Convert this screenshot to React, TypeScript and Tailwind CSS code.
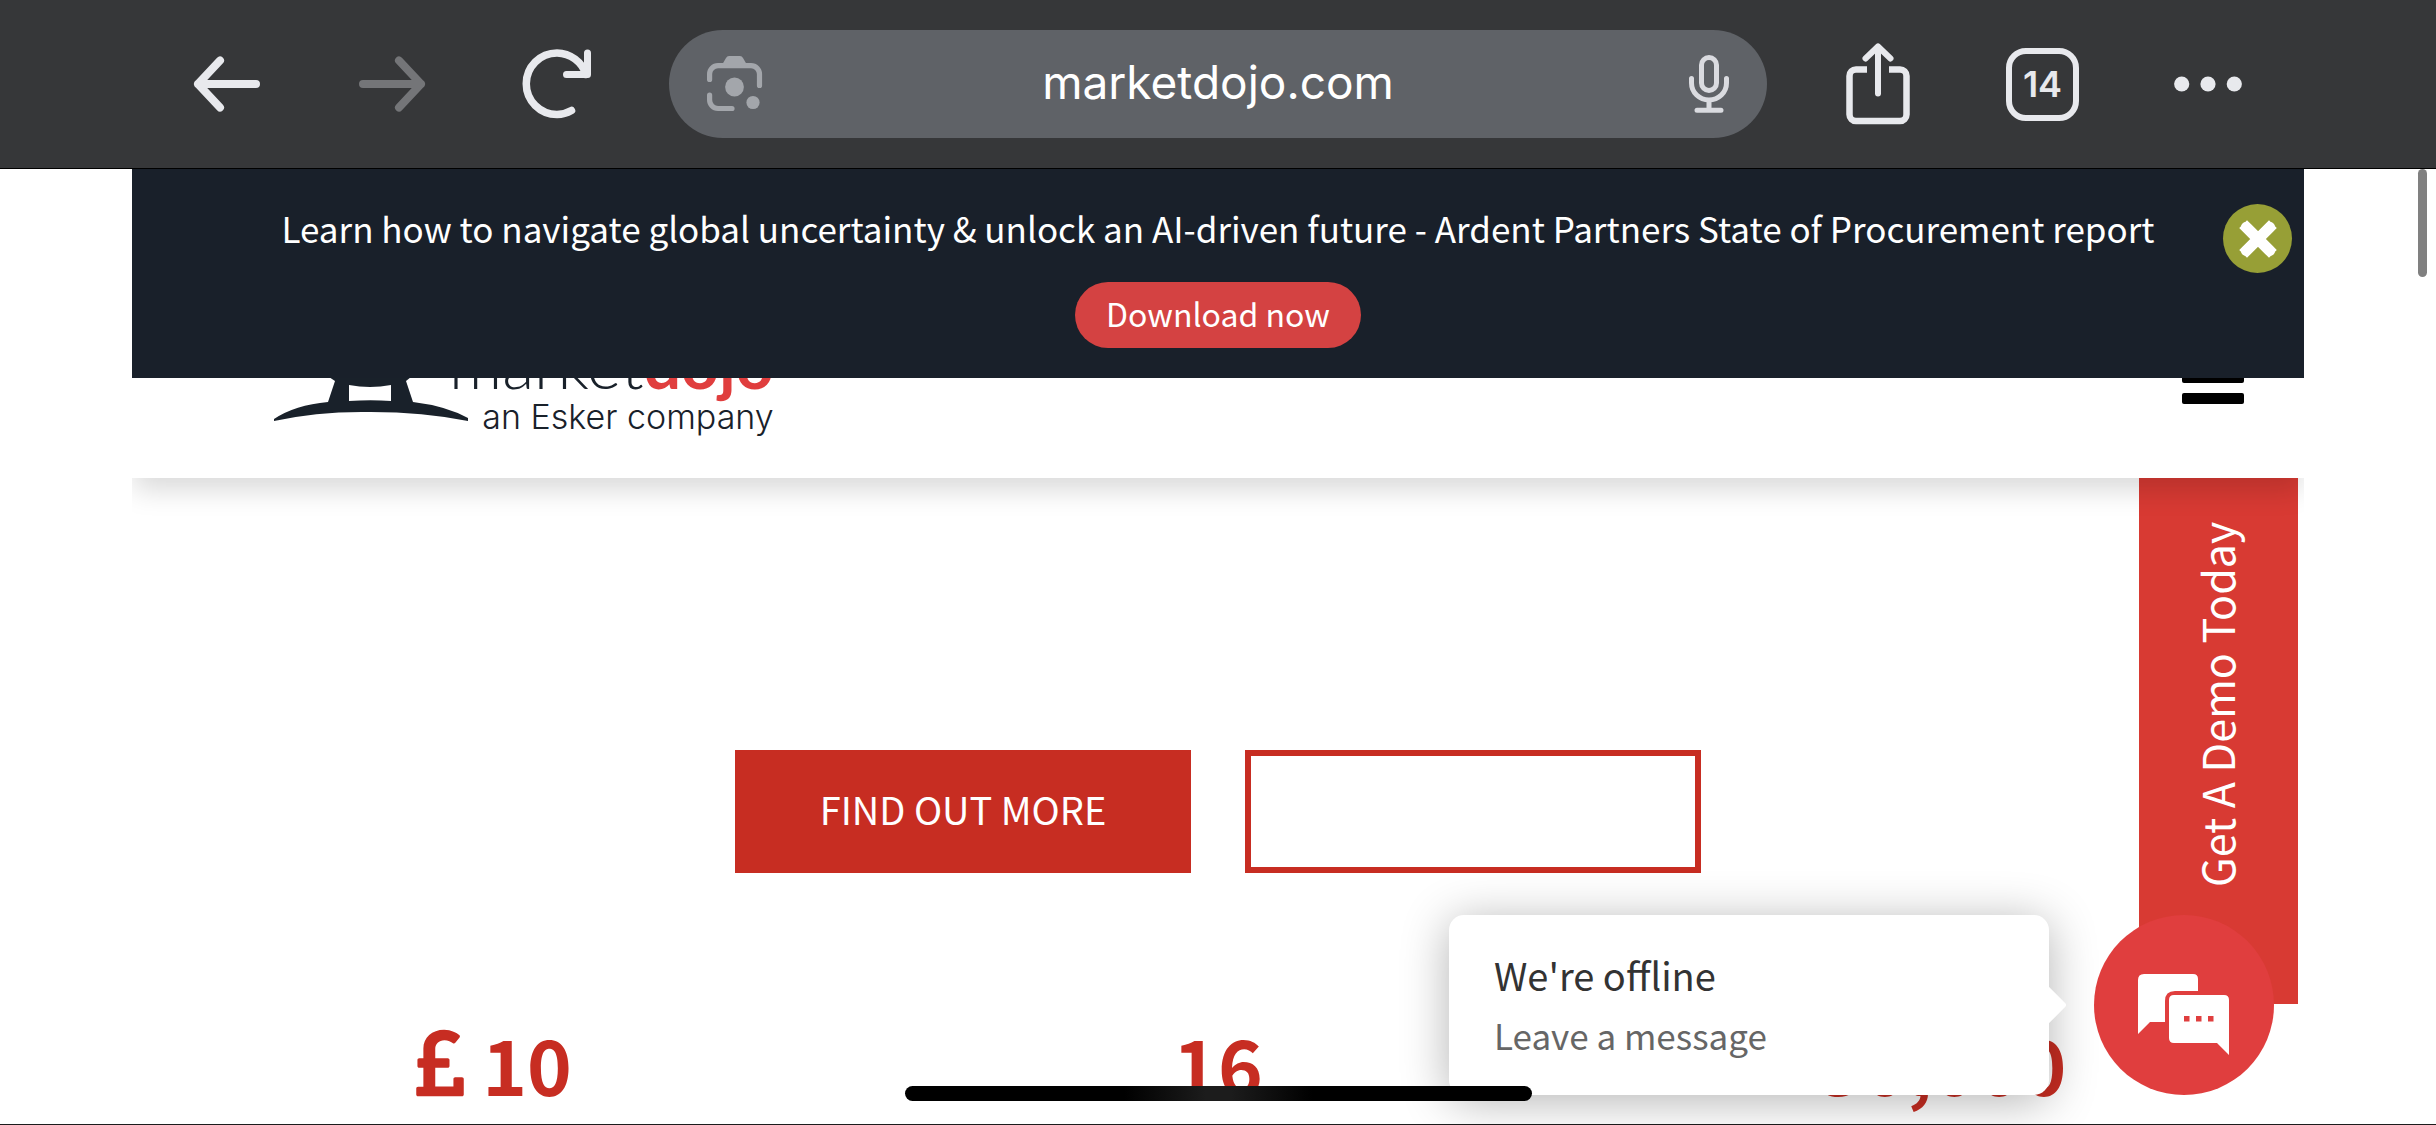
import { useState } from "react";
import { FaPoundSign } from "react-icons/fa";

const STATS = [
  { value: "10", pound: true },
  { value: "16", pound: false },
  { value: "30,000", pound: false },
];

const toolButton = "flex h-full w-[165px] items-center justify-center text-[#e8e9ed]";

function BackIcon() {
  return (
    <svg width="68" height="56" viewBox="0 0 68 56" fill="none" stroke="currentColor" strokeWidth="8" strokeLinecap="round" strokeLinejoin="round">
      <path d="M27 4.500 L5 28 L27 51.500 M5 28 H63" />
    </svg>
  );
}

function ForwardIcon() {
  return (
    <svg width="68" height="56" viewBox="0 0 68 56" fill="none" stroke="currentColor" strokeWidth="8" strokeLinecap="round" strokeLinejoin="round">
      <path d="M41 4.500 L63 28 L41 51.500 M63 28 H5" />
    </svg>
  );
}

function ReloadIcon() {
  return (
    <svg width="70" height="70" viewBox="0 0 70 70" fill="none" stroke="currentColor" strokeWidth="7.500" strokeLinecap="round" strokeLinejoin="round">
      <path d="M49.500 61.500 A30.500 30.500 0 0 1 35 65.500 A30.500 30.500 0 0 1 35 4 A31 31 0 0 1 64 25.500" />
      <path d="M65.500 4 V25.500 H44.500" strokeWidth="7" />
    </svg>
  );
}

function LensIcon() {
  return (
    <svg width="56" height="56" viewBox="0 0 56 56" fill="none" stroke="currentColor" strokeWidth="5.200" strokeLinecap="round">
      <path d="M2.600 23.500 V18 A8.500 8.500 0 0 1 11 9.600 H44 A8.500 8.500 0 0 1 52.500 18 V29.500" />
      <path d="M2.600 39 V44 A8.500 8.500 0 0 0 11 52.500 H25" />
      <path d="M15.500 8 L19 2 Q20 0 22 0 H33 Q35 0 36 2 L39.500 8 Z" fill="currentColor" stroke="none" />
      <circle cx="27.500" cy="31" r="9.400" fill="currentColor" stroke="none" />
      <circle cx="46" cy="46.500" r="6.600" fill="currentColor" stroke="none" />
    </svg>
  );
}

function MicIcon() {
  return (
    <svg width="40" height="58" viewBox="0 0 40 58" fill="none" stroke="currentColor" strokeWidth="5" strokeLinecap="round">
      <rect x="12.500" y="2.500" width="15" height="33" rx="7.500" />
      <path d="M2.500 23.500 V28 A17.500 17 0 0 0 37.500 28 V23.500 M20 46 V54 M8 55.300 H32" />
    </svg>
  );
}

function ShareIcon() {
  return (
    <svg width="64" height="82" viewBox="0 0 64 82" fill="none" stroke="currentColor" strokeWidth="6.500">
      <path d="M21 26.500 H10 A6.500 6.500 0 0 0 3.500 33 V71.500 A6.500 6.500 0 0 0 10 78 H54 A6.500 6.500 0 0 0 60.500 71.500 V33 A6.500 6.500 0 0 0 54 26.500 H43" />
      <path d="M32 5 V50.500 M19.500 15.500 L32 3.500 L44.500 15.500" strokeLinecap="round" strokeLinejoin="round" strokeWidth="6" />
    </svg>
  );
}

function DotsIcon() {
  return (
    <svg width="68" height="16" viewBox="0 0 68 16" fill="currentColor">
      <circle cx="7.700" cy="8" r="7.600" />
      <circle cx="34" cy="8" r="7.600" />
      <circle cx="60.300" cy="8" r="7.600" />
    </svg>
  );
}

function CrossIcon() {
  return (
    <svg width="38" height="38" viewBox="0 0 38 38" stroke="currentColor" fill="none">
      <path d="M8 8 L30 30 M30 8 L8 30" strokeWidth="11" strokeLinecap="square" />
      <path d="M7 7 L31 31 M31 7 L7 31" strokeWidth="10" strokeLinecap="round" />
    </svg>
  );
}

function GateLogo() {
  return (
    <svg width="196" height="72" viewBox="0 0 196 72" fill="#19212a">
      <path
        d="M36 0 H160 Q154 20 138 28 L133 32 L140 53 Q173 57 195 69 V72 Q150 63 98 63 Q46 62 1 72 V70 Q22 56 55 53 L62 32 L56 28 Q42 20 36 0 Z M76 36 V52 Q98 50.500 118 52 V36 Q97 40 76 36 Z"
        fillRule="evenodd"
      />
    </svg>
  );
}

function ChatIcon() {
  return (
    <svg width="92" height="82" viewBox="0 0 92 82" fill="#fff">
      <path d="M6 0 H55 Q60 0 60 5 V17 H37 Q27 17 27 27 V48 H12 L0 60 V6 Q0 0 6 0 Z" />
      <path d="M36 21 H86 Q91 21 91 26 V81 L79 69 H36 Q31 69 31 64 V26 Q31 21 36 21 Z" />
      <path d="M46 42 h5.500 v5.500 h-5.500 Z M58 42 h5.500 v5.500 h-5.500 Z M70 42 h5.500 v5.500 h-5.500 Z" fill="#e03e3e" />
    </svg>
  );
}

function Toolbar() {
  return (
    <nav className="flex h-[169px] shrink-0 items-center border-b border-black bg-[#363739] pr-[146px] pl-36">
      <button aria-label="Back" className={toolButton}><BackIcon /></button>
      <button aria-label="Forward" disabled className="flex h-full w-[165px] items-center justify-center text-[#747578]"><ForwardIcon /></button>
      <button aria-label="Reload" className={toolButton}><ReloadIcon /></button>
      <div className="mr-7 ml-[30px] flex h-[108px] flex-1 items-center justify-between rounded-full bg-[#5f6267] px-[38px]">
        <button aria-label="Search with camera" className="w-14 text-[#a3a6ab]"><LensIcon /></button>
        <button className="pb-1 font-['Inter',sans-serif] text-[46px] leading-[60px] text-white">marketdojo.com</button>
        <button aria-label="Voice search" className="flex w-14 justify-end text-[#dadbe0]"><MicIcon /></button>
      </div>
      <button aria-label="Share" className={toolButton}><ShareIcon /></button>
      <button aria-label="Open tabs" className={toolButton}>
        <span className="flex size-[73px] items-center justify-center rounded-[20px] border-[6px] border-current font-['Inter',sans-serif] text-[36px] leading-10 font-semibold">14</span>
      </button>
      <button aria-label="More" className={toolButton}><DotsIcon /></button>
    </nav>
  );
}

function Banner({ onClose }: { onClose: () => void }) {
  return (
    <div className="absolute inset-x-0 top-0 z-30 flex h-[209px] flex-col items-center bg-[#19202a] pt-8 text-white">
      <p className="text-[35px] leading-[54px] whitespace-nowrap">
        Learn how to navigate global uncertainty &amp; unlock an AI-driven future - Ardent Partners State of Procurement report
      </p>
      <a href="#report" className="mt-[27px] rounded-full bg-[#d44242] px-[31px] pb-1 text-[32px] leading-[62px]">Download now</a>
      <button
        aria-label="Close"
        onClick={onClose}
        className="absolute top-[35px] right-3 flex size-[69px] items-center justify-center rounded-full bg-[#979f36]"
      >
        <CrossIcon />
      </button>
    </div>
  );
}

function SiteHeader() {
  return (
    <header className="relative z-20 flex h-[309px] items-end justify-between bg-white pr-[60px] pb-[57px] pl-[141px] shadow-[0_14px_26px_-2px_rgba(0,0,0,0.15)]">
      <a href="#home" className="flex items-end text-[#19212a]">
        <GateLogo />
        <span className="-mb-4 -ml-5 flex flex-col items-end font-['Lato',sans-serif] font-light">
          <span className="mb-2 text-[66px] leading-[50px]">
            market<span className="font-bold text-[#e03e3e]">dojo</span>
          </span>
          <span className="font-['Inter',sans-serif] text-[34px] leading-10">an Esker company</span>
        </span>
      </a>
      <button aria-label="Menu" className="mb-[17px] flex w-[62px] flex-col gap-[10px]">
        <span className="h-[11px] rounded-xs bg-black" />
        <span className="h-[11px] rounded-xs bg-black" />
        <span className="h-[11px] rounded-xs bg-black" />
      </button>
    </header>
  );
}

function ChatWidget() {
  return (
    <aside className="absolute right-[162px] bottom-[30px] z-30 flex items-center gap-[45px]">
      <div className="relative flex h-[180px] w-[600px] flex-col justify-center rounded-[15px] bg-white pl-[45px] shadow-[0_6px_48px_rgba(0,0,0,0.3)]">
        <span className="absolute top-[75px] right-[-12px] size-[30px] rotate-45 rounded-[3px] bg-white" />
        <p className="text-[38px] leading-[60px] text-[#333]">We're offline</p>
        <p className="text-[35px] leading-[60px] text-[#666]">Leave a message</p>
      </div>
      <button aria-label="Open chat" className="flex size-[180px] items-center justify-center rounded-full bg-[#e03e3e] pt-5">
        <ChatIcon />
      </button>
    </aside>
  );
}

export default function App() {
  const [showBanner, setShowBanner] = useState(true);

  return (
    <div className="relative flex h-screen flex-col overflow-hidden bg-white font-['Noto_Sans_CJK_SC',sans-serif]">
      <Toolbar />
      <div className="relative mx-[132px] flex-1 overflow-hidden">
        {showBanner && <Banner onClose={() => setShowBanner(false)} />}
        <SiteHeader />
        <a
          href="#demo"
          className="absolute top-[235px] right-[6px] z-10 flex h-[600px] w-[159px] rotate-180 items-center justify-center bg-[#d83a33] pl-1.5 text-[43px] leading-[60px] text-white [writing-mode:vertical-rl]"
        >
          Get A Demo Today
        </a>
        <main className="pt-[272px]">
          <div className="flex justify-center gap-[54px]">
            <a href="#more" className="flex h-[123px] w-[456px] items-center justify-center bg-[#c72d22] pb-[6px] text-[38px] leading-[60px] text-white">
              FIND OUT MORE
            </a>
            <a href="#video" aria-label="Watch video" className="h-[123px] w-[456px] border-[6px] border-[#c72d22]" />
          </div>
          <div className="mt-[135px] grid grid-cols-3 text-[76px] leading-[110px] font-bold text-[#c72d22]">
            {STATS.map((stat) => (
              <div key={stat.value} className="flex items-center justify-center gap-[18px]">
                {stat.pound && <FaPoundSign className="h-[76px] w-12" />}
                <span>{stat.value}</span>
              </div>
            ))}
          </div>
        </main>
      </div>
      <div className="absolute top-[169px] right-[9px] h-[108px] w-[9px] rounded-full bg-[#808080]" />
      <ChatWidget />
      <div className="absolute inset-x-0 bottom-6 z-40 flex justify-center">
        <div className="h-[15px] w-[627px] rounded-full bg-[linear-gradient(90deg,#000_35%,#1c1c1c_48%,#1c1c1c_52%,#000_65%)]" />
      </div>
      <div className="absolute inset-x-0 bottom-0 h-px bg-[#1c1c1c]" />
    </div>
  );
}
